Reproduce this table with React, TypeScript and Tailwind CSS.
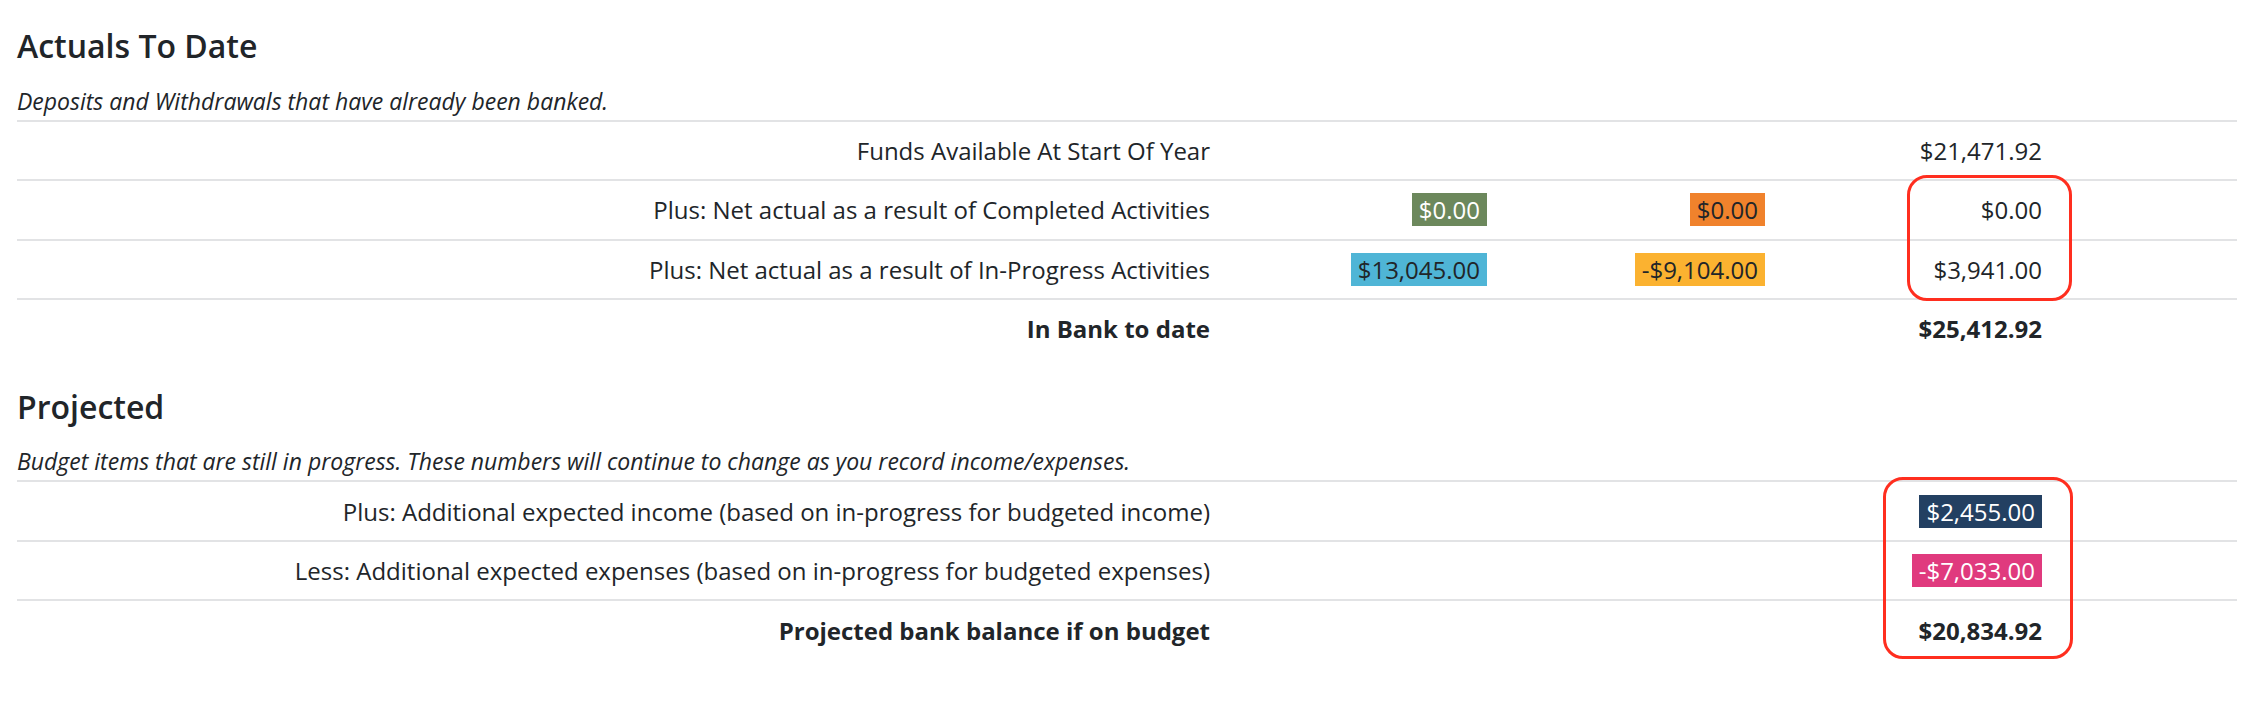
type Badge = { text: string; className: string };

type Row = {
  label: string;
  col2?: Badge;
  col3?: Badge;
  value: string | Badge;
  bold?: boolean;
};

const actuals: Row[] = [
  { label: 'Funds Available At Start Of Year', value: '$21,471.92' },
  {
    label: 'Plus: Net actual as a result of Completed Activities',
    col2: { text: '$0.00', className: 'bg-[#6c885c] text-white' },
    col3: { text: '$0.00', className: 'bg-[#f0822c] text-[#212529]' },
    value: '$0.00',
  },
  {
    label: 'Plus: Net actual as a result of In-Progress Activities',
    col2: { text: '$13,045.00', className: 'bg-[#4fb5d6] text-[#212529]' },
    col3: { text: '-$9,104.00', className: 'bg-[#fbb230] text-[#212529]' },
    value: '$3,941.00',
  },
  { label: 'In Bank to date', value: '$25,412.92', bold: true },
];

const projected: Row[] = [
  {
    label: 'Plus: Additional expected income (based on in-progress for budgeted income)',
    value: { text: '$2,455.00', className: 'bg-[#234062] text-white' },
  },
  {
    label: 'Less: Additional expected expenses (based on in-progress for budgeted expenses)',
    value: { text: '-$7,033.00', className: 'bg-[#e03a7e] text-white' },
  },
  { label: 'Projected bank balance if on budget', value: '$20,834.92', bold: true },
];

const Pill = ({ badge }: { badge: Badge }) => (
  <span className={`inline-block px-[7px] leading-[33px] ${badge.className}`}>{badge.text}</span>
);

const Cell = ({ content }: { content?: string | Badge }) => {
  if (!content) return <div />;
  return <div className="text-right">{typeof content === 'string' ? content : <Pill badge={content} />}</div>;
};

const SummaryTable = ({ rows }: { rows: Row[] }) => (
  <div>
    {rows.map((row) => (
      <div
        key={row.label}
        className={`grid grid-cols-[1193px_277px_278px_277px_1fr] items-center border-t-2 border-[#e2e3e5] py-[12.25px] leading-[33px] ${
          row.bold ? 'font-bold' : ''
        }`}
      >
        <div className="text-right whitespace-nowrap">{row.label}</div>
        <Cell content={row.col2} />
        <Cell content={row.col3} />
        <Cell content={row.value} />
        <div />
      </div>
    ))}
  </div>
);

const Section = ({ title, note, rows, className }: { title: string; note: string; rows: Row[]; className: string }) => (
  <section className={className}>
    <h2 className="text-[32px] font-semibold leading-[1.2] mb-[19.3px]">{title}</h2>
    <p className="italic text-[23px] leading-[33px] mb-[2px]">{note}</p>
    <SummaryTable rows={rows} />
  </section>
);

export default function App() {
  return (
    <div
      className="relative w-[2252px] h-[722px] bg-white pl-[17px] pr-[15px] text-[24px] text-[#212529]"
      style={{ fontFamily: '"Open Sans", "Noto Sans", Arial, sans-serif' }}
    >
      <Section
        className="pt-[27px]"
        title="Actuals To Date"
        note="Deposits and Withdrawals that have already been banked."
        rows={actuals}
      />
      <Section
        className="pt-[30px]"
        title="Projected"
        note="Budget items that are still in progress. These numbers will continue to change as you record income/expenses."
        rows={projected}
      />

      {/* annotation outlines */}
      <div className="absolute left-[1907px] top-[175px] h-[126px] w-[165px] rounded-[20px] border-[3px] border-[#ff2e1f]" />
      <div className="absolute left-[1883px] top-[477px] h-[182px] w-[190px] rounded-[20px] border-[3px] border-[#ff2e1f]" />
    </div>
  );
}
